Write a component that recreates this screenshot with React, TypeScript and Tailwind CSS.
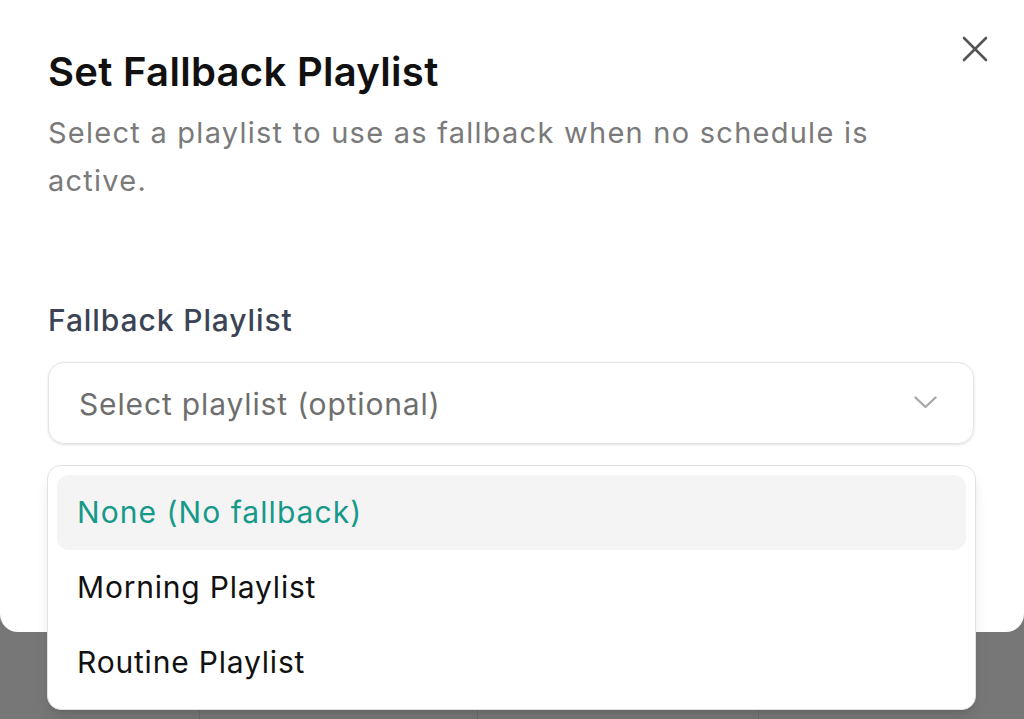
const options = [
  { label: "None (No fallback)", active: true },
  { label: "Morning Playlist", active: false },
  { label: "Routine Playlist", active: false },
];

const App = () => {
  return (
    <div className="relative flex h-[719px] w-[1024px] flex-col overflow-hidden bg-[#777777] font-['Inter','Liberation_Sans',sans-serif]">
      {/* dialog */}
      <div className="relative h-[632px] shrink-0 rounded-b-[18px] bg-white pl-12 pr-[50px] pt-[50px]">
        <button className="absolute right-[35px] top-[35px] text-[#555555]">
          <svg width="28" height="28" viewBox="0 0 28 28" fill="none" stroke="currentColor" strokeWidth="2.6" strokeLinecap="round">
            <path d="M3 3 25 25M25 3 3 25" />
          </svg>
        </button>
        <h2 className="text-[40px] font-semibold leading-[44px] tracking-[0.3px] text-[#111111]">
          Set Fallback Playlist
        </h2>
        <p className="mt-[15px] pr-[80px] text-[29px] leading-[48px] tracking-[1.25px] text-[#7a7a7a]">
          Select a playlist to use as fallback when no schedule is active.
        </p>
        <label className="mt-[95px] block text-[30px] font-medium leading-[40px] tracking-[0.9px] text-[#3a4455]">
          Fallback Playlist
        </label>
        <div className="mt-[22px] flex h-[82px] items-center justify-between rounded-[16px] border-[1.5px] border-[#e3e3e3] pb-[2px] pl-[30px] pr-[36px] shadow-sm">
          <span className="mt-[4px] text-[30px] tracking-[0.85px] text-[#6e6e6e]">Select playlist (optional)</span>
          <svg width="23" height="13" viewBox="0 0 23 13" fill="none" stroke="#a8a8a8" strokeWidth="2.4" strokeLinecap="round" strokeLinejoin="round">
            <path d="M1.5 1.5 11.5 11 21.5 1.5" />
          </svg>
        </div>
      </div>

      {/* backdrop content */}
      <div className="grid flex-1 grid-cols-[199px_278px_281px_1fr]">
        <div />
        <div className="border-l border-[#6c6c6c]" />
        <div className="border-l border-[#6c6c6c]" />
        <div className="border-l border-[#6c6c6c]" />
      </div>

      {/* select menu */}
      <div className="absolute left-[47px] top-[465px] w-[929px] rounded-[14px] border-[1.5px] border-[#e2e2e2] bg-white p-[9px] shadow-lg">
        {options.map((o) => (
          <div
            key={o.label}
            className={
              o.active
                ? "flex h-[75px] items-center rounded-[12px] bg-[#f4f4f5] pl-[20px] text-[30px] tracking-[1.05px] text-[#17998a]"
                : "flex h-[75px] items-center pl-[20px] text-[30px] tracking-[0.8px] text-[#111111]"
            }
          >
            {o.label}
          </div>
        ))}
      </div>
    </div>
  );
};

export default App;
